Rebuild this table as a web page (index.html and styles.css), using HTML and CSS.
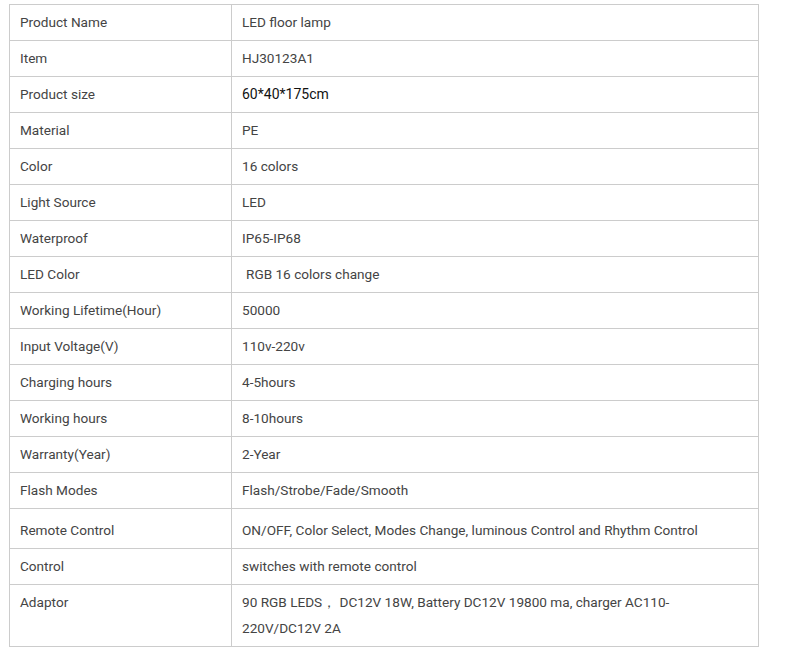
FILE: index.html
```html
<!DOCTYPE html>
<html>
<head>
<meta charset="utf-8">
<link rel="stylesheet" href="styles.css">
</head>
<body>
<table class="spec">
  <tr><td class="k">Product Name</td><td>LED floor lamp</td></tr>
  <tr><td class="k">Item</td><td>HJ30123A1</td></tr>
  <tr><td class="k">Product size</td><td class="dark">60*40*175cm</td></tr>
  <tr><td class="k">Material</td><td>PE</td></tr>
  <tr><td class="k">Color</td><td>16 colors</td></tr>
  <tr><td class="k">Light Source</td><td>LED</td></tr>
  <tr><td class="k">Waterproof</td><td>IP65-IP68</td></tr>
  <tr><td class="k">LED Color</td><td class="indent">RGB 16 colors change</td></tr>
  <tr><td class="k">Working Lifetime(Hour)</td><td>50000</td></tr>
  <tr><td class="k">Input Voltage(V)</td><td>110v-220v</td></tr>
  <tr><td class="k">Charging hours</td><td>4-5hours</td></tr>
  <tr><td class="k">Working hours</td><td>8-10hours</td></tr>
  <tr><td class="k">Warranty(Year)</td><td>2-Year</td></tr>
  <tr><td class="k">Flash Modes</td><td>Flash/Strobe/Fade/Smooth</td></tr>
  <tr class="tall"><td class="k">Remote Control</td><td>ON/OFF, Color Select, Modes Change, luminous Control and Rhythm Control</td></tr>
  <tr><td class="k">Control</td><td>switches with remote control</td></tr>
  <tr><td class="k">Adaptor</td><td class="wrap">90 RGB LEDS，&nbsp;DC12V 18W, Battery DC12V 19800 ma, charger AC110-220V/DC12V 2A</td></tr>
</table>
</body>
</html>
```
FILE: styles.css
```css
html, body {
  margin: 0;
  padding: 0;
  background: #fff;
}
.spec {
  margin: 4px 0 0 9px;
  width: 750px;
  border-collapse: collapse;
  font-family: Roboto, "Liberation Sans", Arial, sans-serif;
  font-size: 13.6px;
  color: #444;
}
.spec td {
  border: 1px solid #ccc;
  padding: 4px 10px 5px 10px;
  line-height: 26px;
  vertical-align: top;
  text-align: left;
}
.spec td.k {
  width: 201px;
}
.spec tr.tall td {
  padding-top: 8px;
  padding-bottom: 5px;
}
.spec td.dark {
  color: #111;
  font-size: 14px;
}
.spec td.indent {
  padding-left: 14px;
}
.spec td.wrap {
  padding-right: 70px;
}
```
